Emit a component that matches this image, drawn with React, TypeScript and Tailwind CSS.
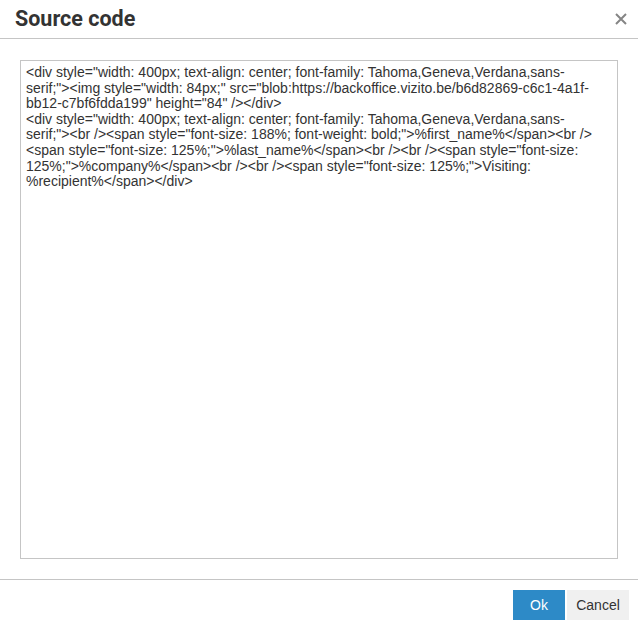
import React from "react";

const lines = [
  `<div style="width: 400px; text-align: center; font-family: Tahoma,Geneva,Verdana,sans-`,
  `serif;"><img style="width: 84px;" src="blob:https://backoffice.vizito.be/b6d82869-c6c1-4a1f-`,
  `bb12-c7bf6fdda199" height="84" /></div>`,
  `<div style="width: 400px; text-align: center; font-family: Tahoma,Geneva,Verdana,sans-`,
  `serif;"><br /><span style="font-size: 188%; font-weight: bold;">%first_name%</span><br />`,
  `<span style="font-size: 125%;">%last_name%</span><br /><br /><span style="font-size:`,
  `125%;">%company%</span><br /><br /><span style="font-size: 125%;">Visiting:`,
  `%recipient%</span></div>`,
];

export default function App() {
  return (
    <div className="w-[638px] h-[629px] bg-white flex flex-col" style={{ fontFamily: '"Liberation Sans", Arial, sans-serif' }}>
      <div className="h-[39px] border-b border-[#c5c5c5] flex items-center justify-between pl-[15px] pr-[11px] shrink-0">
        <div className="text-[21.5px] font-bold text-[#333] leading-none" style={{ fontFamily: 'Roboto, "Liberation Sans", sans-serif' }}>Source code</div>
        <svg width="12" height="12" viewBox="0 0 12 12">
          <path d="M1 1 L11 11 M11 1 L1 11" stroke="#858585" strokeWidth="2" />
        </svg>
      </div>
      <div className="flex-1 px-[20px] pt-[21px] pb-[20px]">
        <div className="h-[499px] border border-[#c5c5c5] px-[5px] pt-[4px] text-[14px] leading-[15.6px] text-[#333] whitespace-pre overflow-hidden">
          {lines.map((l, i) => (
            <div key={i}>{l}</div>
          ))}
        </div>
      </div>
      <div className="h-[50px] border-t border-[#c5c5c5] flex justify-end items-start pt-[10px] pr-[9px] gap-[2px] shrink-0">
        <button className="w-[52px] h-[30px] bg-[#2d8ac7] text-white text-[14px]">Ok</button>
        <button className="w-[62px] h-[30px] bg-[#f0f0f0] text-[#333] text-[14px]">Cancel</button>
      </div>
    </div>
  );
}
